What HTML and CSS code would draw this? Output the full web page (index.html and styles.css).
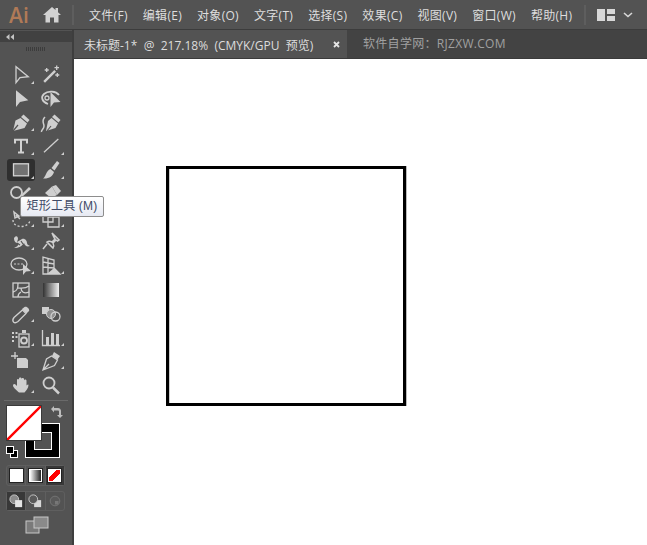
FILE: index.html
```html
<!DOCTYPE html>
<html lang="zh-CN">
<head>
<meta charset="utf-8">
<title>Adobe Illustrator</title>
<link rel="stylesheet" href="styles.css">
</head>
<body>
<div class="app">
  <header class="menubar">
    <span class="logo">Ai</span>
    <svg class="home" viewBox="0 0 18 16" width="18" height="16"><path d="M9 0 0 8h2.500v7.500H7V10.500h4v5h4.500V8H18l-3-2.700V1h-2.500v2z"/></svg>
    <span class="vsep vsep-a"></span>
    <nav class="menus">
      <span>文件(F)</span><span>编辑(E)</span><span>对象(O)</span><span>文字(T)</span><span>选择(S)</span><span>效果(C)</span><span>视图(V)</span><span>窗口(W)</span><span>帮助(H)</span>
    </nav>
    <span class="vsep vsep-b"></span>
    <svg class="workspace" viewBox="0 0 18 12" width="18" height="12"><path d="M0 0h8v12H0zM10 0h8v5h-8zM10 7h8v5h-8z"/></svg>
    <svg class="chev" viewBox="0 0 10 6" width="10" height="6"><path d="M1 1l4 3.500L9 1" fill="none" stroke="#d8d8d8" stroke-width="1.600"/></svg>
  </header>
  <div class="main">
    <aside class="toolbar">
      <div class="collapse"><svg class="arrows" viewBox="0 0 8 6" width="8" height="6"><path d="M3.500 0v6L0 3zM8 0v6L4.500 3z"/></svg></div>
      <div class="grip"></div>
      <div class="tools">
        <div class="tool more"><svg viewBox="0 0 24 24"><path d="M7 3.700v16l4-5 8.300-1z" class="ol"/></svg></div>
        <div class="tool"><svg viewBox="0 0 24 24"><path d="M4.300 18l11-11 1.700 1.700-11 11z" class="fl"/><path d="M17.700 2.500v4.500M15.500 4.700H20M7.700 5v4M5.700 7h4M18.300 10v4M16.300 12h4" class="ln"/></svg></div>
        <div class="tool"><svg viewBox="0 0 24 24"><path d="M7 3.200V20l4-5 8.300-1.800z" class="fl"/></svg></div>
        <div class="tool"><svg viewBox="0 0 24 24"><path d="M9 17C3 15 1.500 10 5 7c4-3.500 12-3 15 1" class="ln2"/><path d="M11.500 5v15l3.500-4.500 6.500-.500z" class="fl"/><circle cx="8" cy="11" r="2" class="ln"/></svg></div>
        <div class="tool more"><svg viewBox="0 0 24 24"><path d="M14.500 3.500l6 5.500-2 2.500-6.500-5.500z" class="fl"/><path d="M11.500 7l6.500 5.500-2.500 4.500-11.500 3 2.500-10.500z" class="fl"/><path d="M4 20l5-6" class="slit"/></svg></div>
        <div class="tool"><svg viewBox="0 0 24 24"><path d="M15.500 3.500l6 5.500-2 2.500-6.500-5.500z" class="fl"/><path d="M12.500 7l6.500 5.500-2.500 4.500-9.500 3 2-10z" class="fl"/><path d="M8 20l4-5" class="slit"/><path d="M6 6C2 10 5 12 5 15c0 3-3 4-2.500 6" class="fl3"/></svg></div>
        <div class="tool more"><svg viewBox="0 0 24 24"><path d="M6 9.500V5.800h12v3.700M12 5.800v12.700M9 18.500h6" class="ln4"/></svg></div>
        <div class="tool more"><svg viewBox="0 0 24 24"><path d="M5 18.300 19.300 5" class="ln"/></svg></div>
        <div class="tool more active"><svg viewBox="0 0 24 24"><rect x="4.500" y="5.800" width="15" height="12" class="box"/></svg></div>
        <div class="tool more"><svg viewBox="0 0 24 24"><path d="M18 3l2.500 2-5 7.500-3-2.500z" class="fl"/><path d="M11.500 11l3.500 3c-1 4-5 7-11 6.500 3-1.500 3-8 7.500-9.500z" class="fl"/></svg></div>
        <div class="tool more"><svg viewBox="0 0 24 24"><circle cx="7.500" cy="10.500" r="5.500" class="ln2"/><path d="M12 13l8-8 2 2-9 8z" class="fl"/></svg></div>
        <div class="tool more"><svg viewBox="0 0 24 24"><path d="M13 4.500 17 3l5 6-4 4z" class="fl"/><path d="M6 11l7-6.500 5 8.500-6 3z" class="fl"/></svg></div>
        <div class="tool more"><svg viewBox="0 0 24 24"><path d="M5 6l5 4-4 2zM7 9l4 4" class="fl3"/><path d="M4 14c0 8 14 9 17 1" class="dash"/></svg></div>
        <div class="tool more"><svg viewBox="0 0 24 24"><path d="M4 6h10v10H4zM9 11h11v10H9z" class="ln"/></svg></div>
        <div class="tool more"><svg viewBox="0 0 24 24"><path d="M5 9c2-3 4-2 4 1l-1 3 5-3c3-1 5 2 5 4s2 2 3 3c-3 1-5 0-6-3-2 3-5 5-10 5 3-1 5-3 4-5-2 0-4-1-4-5z" class="fl"/><path d="M8 14l3 2M12 12l2 3" class="slit"/></svg></div>
        <div class="tool more"><svg viewBox="0 0 24 24"><path d="M13 4l7 7-1.500 1-1.500-1-3 3c1 2 1 3.500 0 5l-6-6c1.500-1 3-1 5 0l3-3-1-1.500zM8 15l-4 5" class="fl3"/></svg></div>
        <div class="tool more"><svg viewBox="0 0 24 24"><ellipse cx="10" cy="11" rx="8" ry="6" class="ln"/><path d="M5 11h9" class="dash2"/><path d="M14 11v11l3-3.500 5-.500z" class="fl"/></svg></div>
        <div class="tool more"><svg viewBox="0 0 24 24"><path d="M4 4v17h17L15 15V7zM4 9l11 2M4 14l11 1M9 6v15" class="ln"/><path d="M8 21l7-6 6 6z" class="fl"/></svg></div>
        <div class="tool"><svg viewBox="0 0 24 24"><rect x="4" y="6" width="16" height="14" class="ln"/><path d="M4 15c5-1 5-5 5-9M9 11c4 0 7 1 11-2M12 11c0 4 3 6 8 4M12 15c-2 1-3 3-3 5" class="ln"/></svg></div>
        <div class="tool"><svg viewBox="0 0 24 24"><defs><linearGradient id="g1"><stop offset="0" stop-color="#333"/><stop offset="1" stop-color="#efefef"/></linearGradient></defs><rect x="4" y="6" width="16" height="14" fill="url(#g1)"/></svg></div>
        <div class="tool more"><svg viewBox="0 0 24 24"><path d="M13.500 9l3.500 3.500L9 20.500c-2 1.500-3.500 1.500-4.500.500s-1-2.500.500-4.500z" class="ol"/><path d="M13 8l2.500-2c2-1.500 5.500 2 4.500 4l-2.500 2.500z" class="fl"/></svg></div>
        <div class="tool"><svg viewBox="0 0 24 24"><rect x="3" y="6" width="7" height="7" class="fl"/><circle cx="12" cy="13" r="4.500" class="fl4"/><circle cx="16.500" cy="15.500" r="4.500" class="ln"/></svg></div>
        <div class="tool more"><svg viewBox="0 0 24 24"><path d="M3 7h2v2H3zM6.500 7h2v2h-2zM3 11h2v2H3zM6.500 11h2v2h-2zM3 15h2v2H3z" class="fl"/><path d="M13 5h4v3h-4z" class="fl"/><rect x="10" y="9" width="10" height="13" class="ln"/><circle cx="15" cy="15.500" r="3" class="ln2"/></svg></div>
        <div class="tool more"><svg viewBox="0 0 24 24"><path d="M3.500 5v15.500H21" class="ln"/><path d="M7 12h3v8H7zM12 8h3v12h-3zM17 9h3v11h-3z" class="fl"/></svg></div>
        <div class="tool"><svg viewBox="0 0 24 24"><path d="M2 8h7M6 4v7" class="ln"/><path d="M8 10h9l2 2v8H8z" class="fl"/></svg></div>
        <div class="tool more"><svg viewBox="0 0 24 24"><path d="M15 4l6 4-2.500 3.500-5.500-3.500z" class="fl"/><path d="M12.500 8l6 4-3 5.500-11.500 4.500 3.500-11zM4 22l6-6" class="ol"/></svg></div>
        <div class="tool more"><svg viewBox="0 0 24 24"><path d="M10 20.500C7 18 4 15 4 13.500s1.500-2 2.500-1L8 14V8c0-1.500 2-1.500 2 0V6.500c0-1.500 2.500-1.500 2.500 0V7c0-1.500 2.500-1.500 2.500 0v1.500c0-1.500 2.500-1.500 2.500 0v5c1-1 2-1.500 2-.500 0 3-2.500 5.500-4 7.500z" class="fl"/></svg></div>
        <div class="tool"><svg viewBox="0 0 24 24"><circle cx="10" cy="11" r="5.500" class="ln2"/><path d="M14 15.500l6 6" class="ln3"/></svg></div>
      </div>
      <div class="rule"></div>
      <div class="swatches">
        <div class="stroke"><span class="stroke-in"></span></div>
        <div class="fill"><svg viewBox="0 0 36 36"><path d="M0 36 36 0" stroke="#f00" stroke-width="2.500"/></svg></div>
        <svg class="swap" viewBox="0 0 13 14"><path d="M1 4l3-3v2h4c2 0 3 1.500 3 3v4h2l-3 3-3-3h2V6.500C9 6 8.500 5.500 8 5.500H4v2z" fill="#bdbdbd"/></svg>
        <div class="default"><span class="d-stroke"></span><span class="d-fill"></span></div>
      </div>
      <div class="group modes">
        <span class="cell"><i class="mode solid"></i></span>
        <span class="cell"><i class="mode grad"></i></span>
        <span class="cell on"><i class="mode none"></i></span>
      </div>
      <div class="group draws">
        <span class="cell on"><svg viewBox="0 0 16 16"><circle cx="6" cy="6" r="5" fill="#8b8b8b" stroke="#cfcfcf"/><rect x="7" y="7" width="8" height="8" fill="#e4e4e4"/></svg></span>
        <span class="cell"><svg viewBox="0 0 16 16"><rect x="7" y="7" width="8" height="8" fill="#d8d8d8"/><circle cx="6" cy="6" r="5" fill="#5a5a5a" stroke="#cfcfcf"/></svg></span>
        <span class="cell"><svg viewBox="0 0 16 16"><circle cx="8" cy="8" r="5.500" fill="#5a5a5a" stroke="#777"/><rect x="8" y="8" width="4" height="4" fill="#777"/></svg></span>
      </div>
      <svg class="screen" viewBox="0 0 24 18" width="24" height="18"><rect x="1" y="5" width="13" height="12" fill="#7a7a7a" stroke="#c8c8c8"/><rect x="9" y="1" width="14" height="11" fill="#8a8a8a" stroke="#c8c8c8"/></svg>
    </aside>
    <div class="doc">
      <div class="tabs">
        <div class="tab">
          <span class="tab-title">未标题-1* @ 217.18% (CMYK/GPU 预览)</span>
          <svg class="close" viewBox="0 0 7 7" width="7" height="7"><path d="M1 1l5 5M6 1 1 6" stroke="#e6e6e6" stroke-width="1.800"/></svg>
        </div>
        <div class="tab-other">软件自学网：RJZXW.COM</div>
      </div>
      <main class="canvas"><div class="artboard-square"></div></main>
    </div>
    <div class="tooltip">矩形工具 (M)</div>
  </div>
</div>
</body>
</html>
```
FILE: styles.css
```css
* { box-sizing: border-box; }
html, body { margin: 0; height: 100%; overflow: hidden; }
body { font-family: "Liberation Sans", "Noto Sans CJK SC", sans-serif; font-size: 12px; color: #dcdcdc; background: #535353; }
.app { width: 647px; height: 545px; display: flex; flex-direction: column; }

.menubar { height: 30px; display: flex; align-items: center; background: #535353; border-bottom: 1px solid #3c3c3c; flex: none; }
.logo { font-family: "Open Sans", sans-serif; font-weight: 600; font-size: 21px; color: #b07a57; margin-left: 9px; width: 34px; line-height: 28px; }
.home { fill: #d2d2d2; flex: none; }
.vsep { width: 2px; height: 20px; background: #5e5e5e; flex: none; }
.vsep-a { margin-left: 11px; }
.vsep-b { margin-left: 12px; }
.menus { display: flex; gap: 15px; margin-left: 15px; white-space: nowrap; font-family: "Open Sans", "Noto Sans CJK SC", sans-serif; font-size: 12px; letter-spacing: .3px; color: #dedede; }
.workspace { fill: #d8d8d8; margin-left: 11px; flex: none; }
.chev { margin-left: 8px; flex: none; }

.main { flex: 1; display: flex; position: relative; min-height: 0; }

.toolbar { width: 74px; flex: none; background: #535353; border-right: 2px solid #3e3e3e; display: flex; flex-direction: column; padding-top: 1px; }
.collapse { height: 11px; background: #414141; display: flex; align-items: center; padding-left: 6px; }
.arrows { fill: #c4c4c4; }
.grip { height: 4px; width: 20px; margin: 5px 0 0 26px; background: repeating-linear-gradient(90deg, #3c3c3c 0 1px, transparent 1px 2px); flex: none; }
.tools { display: grid; grid-template-columns: 30px 30px; grid-auto-rows: 23.8px; margin: 12px 0 0 6px; }
.tool { position: relative; display: flex; align-items: center; justify-content: center; }
.tool svg { width: 24px; height: 24px; flex: none; }
.tool.more::after { content: ""; position: absolute; right: 2px; bottom: 3px; border-style: solid; border-width: 0 0 3.500px 3.500px; border-color: transparent transparent #cfcfcf transparent; }
.tool.active { background: #2f2f2f; border-radius: 3px; width: 28px; height: 22px; margin: 1px 0 0 1px; }
.tool.active svg { margin: -1px 0 0 -1px; }
.tool.active::after { right: 1px; bottom: 2px; }
.ol { fill: none; stroke: #cfcfcf; stroke-width: 1.300; }
.fl { fill: #cfcfcf; }
.fl3 { fill: none; stroke: #cfcfcf; stroke-width: 1.500; }
.fl4 { fill: #8f8f8f; stroke: #cfcfcf; }
.ln { fill: none; stroke: #cfcfcf; stroke-width: 1.300; }
.ln2 { fill: none; stroke: #cfcfcf; stroke-width: 1.800; }
.ln3 { fill: none; stroke: #cfcfcf; stroke-width: 2.500; }
.ln4 { fill: none; stroke: #d2d2d2; stroke-width: 2; }
.slit { fill: none; stroke: #535353; stroke-width: 1.200; }
.box { fill: #727272; stroke: #d4d4d4; stroke-width: 1.300; }
.dash { fill: none; stroke: #cfcfcf; stroke-width: 1.300; stroke-dasharray: 2 2; }
.dash2 { fill: none; stroke: #cfcfcf; stroke-dasharray: 2 1.500; }

.rule { height: 1px; background: #6a6a6a; margin: 4px 4px 0; flex: none; }
.swatches { position: relative; height: 58px; margin: 4px 0 0 6px; flex: none; }
.fill { position: absolute; left: 0; top: 0; width: 36px; height: 36px; background: #fff; border: 1px solid #3a3a3a; }
.fill svg { display: block; width: 100%; height: 100%; }
.stroke { position: absolute; left: 19px; top: 18px; width: 35px; height: 35px; background: #000; border: 1px solid #fff; display: flex; align-items: center; justify-content: center; }
.stroke-in { width: 18px; height: 18px; background: #535353; border: 1px solid #fff; }
.swap { position: absolute; left: 44px; top: 0; width: 13px; height: 14px; }
.default { position: absolute; left: 0; top: 41px; width: 12px; height: 12px; }
.d-stroke, .d-fill { position: absolute; width: 8px; height: 8px; border: 1px solid #fff; }
.d-stroke { left: 4px; top: 4px; background: #000; }
.d-fill { left: 0; top: 0; background: #000; }

.group { display: flex; margin-left: 6px; width: 59px; border: 1px solid #5f5f5f; border-radius: 3px; flex: none; }
.modes { height: 21px; margin-top: 2px; }
.draws { height: 20px; margin-top: 5px; }
.cell { flex: 1; display: flex; align-items: center; justify-content: center; border-right: 1px solid #5f5f5f; }
.cell:last-child { border-right: 0; }
.cell.on { background: #383838; }
.cell svg { width: 14px; height: 14px; }
.mode { display: block; width: 13px; height: 13px; border: 1px solid #fff; box-shadow: 0 0 0 1px #222; }
.solid { background: #fff; }
.grad { background: linear-gradient(90deg, #fff, #222); }
.none { background: linear-gradient(135deg, #fff 0 36%, #f00 36% 64%, #fff 64%); }
.screen { margin: 5px 0 0 25px; flex: none; }

.doc { flex: 1; display: flex; flex-direction: column; min-width: 0; }
.tabs { height: 29px; display: flex; background: #434343; flex: none; border-bottom: 1px solid #3a3a3a; }
.tab { width: 273px; background: #535353; display: flex; align-items: center; padding: 2px 0 0 10px; font-family: "Open Sans", "Noto Sans CJK SC", sans-serif; color: #dcdcdc; white-space: pre; position: relative; }
.tab-title { word-spacing: 3.200px; font-size: 12px; }
.close { position: absolute; left: 259px; top: 11px; }
.tab-other { padding-left: 16px; line-height: 27px; color: #a0a0a0; font-family: "Open Sans", "Noto Sans CJK SC", sans-serif; font-size: 12px; letter-spacing: .3px; white-space: nowrap; }
.canvas { flex: 1; background: #fff; padding: 107px 0 0 92px; }
.artboard-square { width: 240px; height: 240px; border: 3px solid #000; box-shadow: 1px 0 0 #bbb, inset 1px 0 0 #ccc; }

.tooltip { position: absolute; left: 20px; top: 166px; height: 21px; width: 84px; line-height: 19px; background: linear-gradient(#fff, #e6e9f2); border: 1px solid #8d8d8d; border-radius: 2px; color: #3f4a66; text-align: center; font-size: 12px; letter-spacing: .2px; white-space: nowrap; }
```
